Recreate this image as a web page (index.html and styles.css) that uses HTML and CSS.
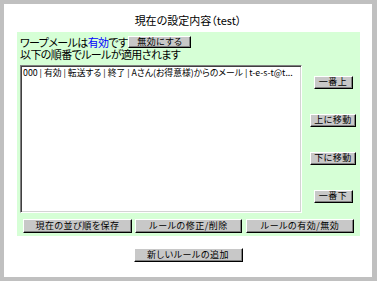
FILE: index.html
```html
<!DOCTYPE html>
<html lang="ja">
<head>
<meta charset="utf-8">
<title>現在の設定内容</title>
<link rel="stylesheet" href="styles.css">
</head>
<body>
<div class="page">
  <div class="title">現在の設定内容（test）</div>
  <div class="panel">
    <div class="status">
      <div class="line line1"><span class="txt">ワープメールは<span class="on">有効</span>です</span><button class="btn btn-off">無効にする</button></div>
      <div class="line"><span class="txt">以下の順番でルールが適用されます</span></div>
    </div>
    <div class="main">
      <div class="listbox">
        <div class="item">000 | 有効 | 転送する | 終了 | Aさん(お得意様)からのメール | t-e-s-t@t...</div>
      </div>
      <div class="side">
        <button class="btn btn-side">一番上</button>
        <button class="btn btn-side wide">上に移動</button>
        <button class="btn btn-side wide">下に移動</button>
        <button class="btn btn-side">一番下</button>
      </div>
    </div>
    <div class="actions">
      <button class="btn btn-act a1">現在の並び順を保存</button>
      <button class="btn btn-act a2">ルールの修正/削除</button>
      <button class="btn btn-act a3">ルールの有効/無効</button>
    </div>
  </div>
  <div class="add">
    <button class="btn btn-add">新しいルールの追加</button>
  </div>
</div>
</body>
</html>
```

FILE: styles.css
```css
* { box-sizing: border-box; }
html, body {
  margin: 0;
  padding: 0;
  background: #c0c0c0;
}
body {
  width: 377px;
  height: 281px;
  overflow: hidden;
  padding: 4px 0 0 4px;
  font-family: "Noto Sans CJK JP", "Noto Sans", sans-serif;
  font-feature-settings: "palt";
  color: #000;
}
.page {
  width: 368px;
  height: 273px;
  background: #fff;
  padding-top: 10px;
}
.title {
  text-align: center;
  font-size: 11px;
  line-height: 12px;
  height: 12px;
  margin-bottom: 6px;
}
.panel {
  margin-left: 13px;
  width: 343px;
  height: 204px;
  background: #d6ffd6;
  padding: 4px 0 0 3px;
}
.status {
  font-size: 11px;
  line-height: 12px;
}
.line {
  height: 12px;
  white-space: nowrap;
  display: flex;
  align-items: center;
}
.txt {
  letter-spacing: -0.6px;
  line-height: 12px;
  height: 12px;
  overflow: visible;
}
.on { color: #0000ff; }
.btn {
  font-family: "Noto Sans CJK JP", "Noto Sans", sans-serif;
  font-feature-settings: "palt";
  font-size: 9px;
  line-height: 9px;
  color: #000;
  background: #c8c8c8;
  border: 1px solid;
  border-color: #ffffff #000000 #000000 #ffffff;
  box-shadow: inset -1px -1px 0 #808080;
  padding: 0 0 2px 0;
  margin: 0;
  display: flex;
  align-items: center;
  justify-content: center;
  letter-spacing: 0.5px;
}
.btn-off {
  width: 63px;
  height: 12px;
  margin-left: 1px;
}
.main {
  display: flex;
  margin-top: 5px;
  height: 148px;
}
.listbox {
  width: 282px;
  height: 148px;
  background: #fff;
  border: 1px solid;
  border-color: #808080 #ffffff #ffffff #808080;
  box-shadow: inset 1px 1px 0 #404040, inset -1px -1px 0 #d4d4d4;
  padding: 1px 2px;
}
.item {
  font-size: 8.8px;
  line-height: 11px;
  white-space: nowrap;
  overflow: hidden;
}
.side {
  flex: 1;
  display: flex;
  flex-direction: column;
  align-items: center;
  gap: 25px;
  padding: 11px 0 0 4px;
}
.btn-side {
  width: 39px;
  height: 13px;
}
.btn-side.wide { width: 46px; }
.actions {
  display: flex;
  margin: 6px 0 0 3px;
}
.btn-act { height: 14px; }
.a1 { width: 109px; }
.a2 { width: 107px; margin-left: 3px; }
.a3 { width: 108px; margin-left: 4px; }
.add {
  display: flex;
  justify-content: center;
  margin-top: 12px;
}
.btn-add {
  width: 109px;
  height: 14px;
}
```
